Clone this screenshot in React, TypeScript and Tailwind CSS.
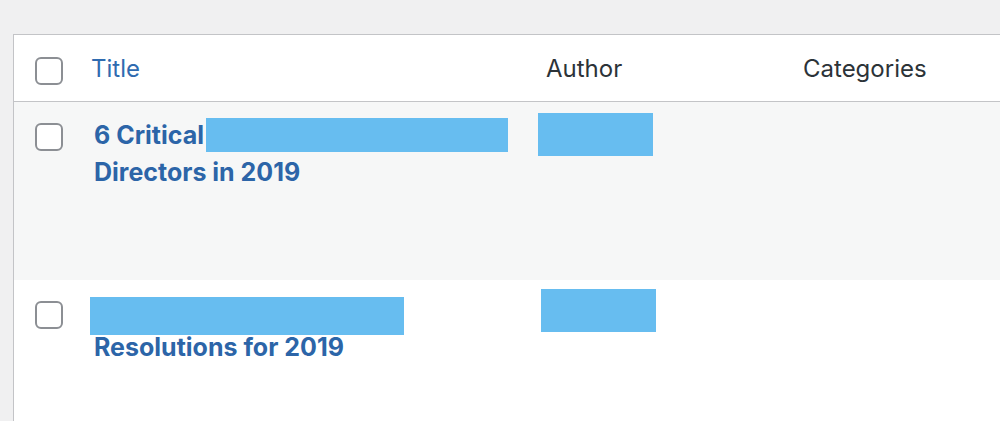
const FONT = { fontFamily: 'Inter, "Liberation Sans", Arial, sans-serif' };

function Checkbox() {
  return <div className="h-[28px] w-[28px] rounded-[6px] border-2 border-[#8c8f94] bg-white" />;
}

function Redacted({ className }: { className: string }) {
  return <span className={"bg-[#67bdf0] " + className} />;
}

export default function App() {
  return (
    <div className="h-[421px] w-[1000px] overflow-hidden bg-[#f0f0f1] pl-[13px] pt-[34px]" style={FONT}>
      <div className="w-[1000px] border border-[#c3c4c7] bg-white">
        {/* Header */}
        <div className="grid h-[67px] grid-cols-[77px_447px_265px_1fr] border-b border-[#c3c4c7] text-[24px] leading-[28px]">
          <div className="pl-[21px] pt-[22px]">
            <Checkbox />
          </div>
          <div className="pt-[20px] text-[#2f6bb0]">Title</div>
          <div className="pl-[8px] pt-[20px] text-[#2c3338]">Author</div>
          <div className="pt-[20px] text-[#2c3338]">Categories</div>
        </div>

        {/* Row 1 */}
        <div className="grid h-[178px] grid-cols-[77px_447px_265px_1fr] bg-[#f6f7f7]">
          <div className="pl-[21px] pt-[21px]">
            <Checkbox />
          </div>
          <div className="pl-[3px] pt-[15px] text-[25px] font-bold leading-[37px] text-[#2c65a8]">
            6 Critical
            <Redacted className="ml-[2px] inline-block h-[34px] w-[302px] align-[-8px]" />
            <br />
            Directors in 2019
          </div>
          <div className="pt-[11px]">
            <Redacted className="block h-[43px] w-[115px]" />
          </div>
          <div />
        </div>

        {/* Row 2 */}
        <div className="grid h-[160px] grid-cols-[77px_447px_265px_1fr] bg-white">
          <div className="pl-[21px] pt-[21px]">
            <Checkbox />
          </div>
          <div className="pl-[3px] pt-[17px]">
            <Redacted className="ml-[-4px] block h-[38px] w-[314px]" />
            <div className="text-[25px] font-bold leading-[24px] text-[#2c65a8]">Resolutions for 2019</div>
          </div>
          <div className="pl-[3px] pt-[9px]">
            <Redacted className="block h-[43px] w-[115px]" />
          </div>
          <div />
        </div>
      </div>
    </div>
  );
}
